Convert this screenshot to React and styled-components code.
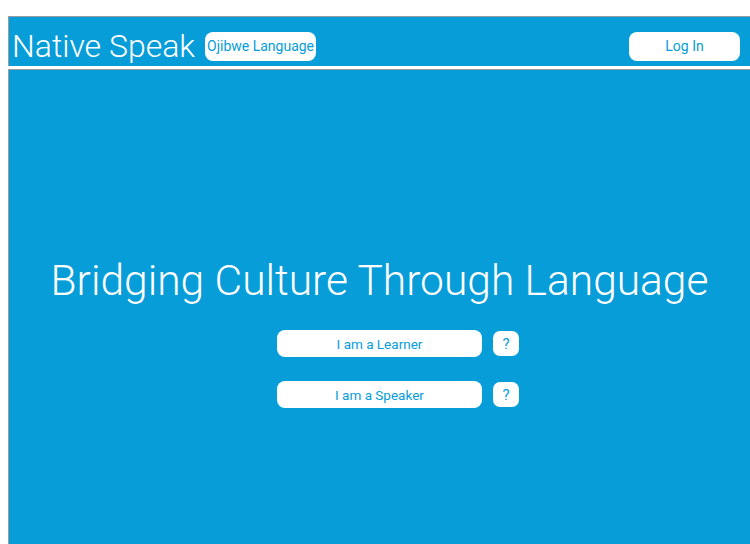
import React from 'react';
import styled, { createGlobalStyle } from 'styled-components';

const blue = '#069dd9';
const edge = '#9c9c9c';

const GlobalStyle = createGlobalStyle`
  html, body {
    margin: 0;
    background: #fff;
    overflow: hidden;
  }
  body {
    padding: 16px 0 0 8px;
    font-family: Roboto, 'Liberation Sans', sans-serif;
  }
`;

const Header = styled.header`
  display: flex;
  align-items: center;
  height: 50px;
  box-sizing: border-box;
  padding: 9px 10px 0 3px;
  background: ${blue};
  border-top: 1px solid ${edge};
  border-left: 1px solid ${edge};
`;

const Brand = styled.h1`
  margin: 0;
  font-size: 32px;
  font-weight: 300;
  color: #fff;
  letter-spacing: 0;
`;

const Pill = styled.button`
  height: 29px;
  width: ${(p) => p.width}px;
  margin-left: ${(p) => p.offset || 0}px;
  border: none;
  border-radius: 8px;
  background: #fff;
  color: ${blue};
  font-family: inherit;
  font-size: 14px;
  padding: 0;
`;

const Spacer = styled.div`
  flex: 1;
`;

const Main = styled.main`
  margin-top: 3px;
  height: 480px;
  background: ${blue};
  border-top: 1px solid ${edge};
  border-left: 1px solid ${edge};
  padding-top: 186px;
  box-sizing: border-box;
`;

const Title = styled.h2`
  margin: 0 0 24px;
  text-align: center;
  font-size: 42.5px;
  line-height: 50px;
  font-weight: 300;
  color: #fff;
`;

const Row = styled.div`
  display: grid;
  grid-template-columns: 1fr auto 1fr;
  align-items: center;
  margin-bottom: 24px;
`;

const Choice = styled.button`
  grid-column: 2;
  width: 205px;
  height: 27px;
  border: none;
  border-radius: 8px;
  background: #fff;
  color: ${blue};
  font-family: inherit;
  font-size: 13.5px;
  padding: 0;
`;

const Help = styled.button`
  grid-column: 3;
  justify-self: start;
  margin-left: 11px;
  width: 26px;
  height: 25px;
  border: none;
  border-radius: 7px;
  background: #fff;
  color: ${blue};
  font-family: inherit;
  font-size: 15px;
  padding: 0;
`;

export default function App() {
  return (
    <>
      <GlobalStyle />
      <Header>
        <Brand>Native Speak</Brand>
        <Pill width={111} offset={10}>Ojibwe Language</Pill>
        <Spacer />
        <Pill width={111}>Log In</Pill>
      </Header>
      <Main>
        <Title>Bridging Culture Through Language</Title>
        <Row>
          <Choice>I am a Learner</Choice>
          <Help>?</Help>
        </Row>
        <Row>
          <Choice>I am a Speaker</Choice>
          <Help>?</Help>
        </Row>
      </Main>
    </>
  );
}
